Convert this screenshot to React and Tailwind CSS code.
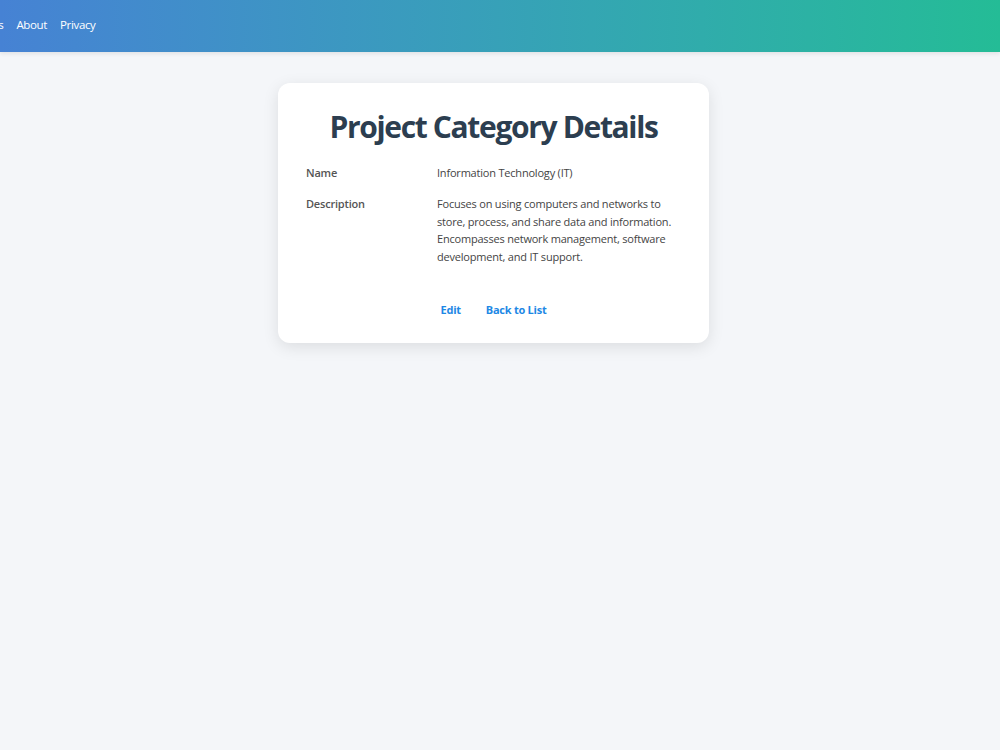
import React from 'react';

export default function App() {
    const rows = [
        { label: 'Name', value: 'Information Technology (IT)' },
        {
            label: 'Description',
            value: 'Focuses on using computers and networks to store, process, and share data and information. Encompasses network management, software development, and IT support.',
        },
    ];

    return (
        <div className="min-h-[750px] bg-[#f4f6f9] font-['Open_Sans',sans-serif]">
            <header className="h-[52px] bg-gradient-to-r from-[#4682d4] to-[#24bc96] shadow-[0_2px_4px_rgba(0,0,0,0.08)] flex items-center overflow-hidden">
                <nav className="flex items-center gap-[13px] -ml-[50px] -mt-[3px] text-[11.5px] tracking-[-0.35px] text-white">
                    <a href="#">Categories</a>
                    <a href="#">About</a>
                    <a href="#">Privacy</a>
                </nav>
            </header>

            <main className="flex justify-center pt-[31px] pr-[13px]">
                <div className="w-[431px] bg-white rounded-[12px] shadow-[0_4px_16px_rgba(0,0,0,0.1)] px-[28px] pt-[25px] pb-[24px]">
                    <h1 className="text-center text-[30px] font-bold text-[#2c3e50] leading-[38px] tracking-[-1.35px]">
                        Project Category Details
                    </h1>
                    <dl className="mt-[18px] flex flex-col gap-[14px] text-[11px] tracking-[-0.2px]">
                        {rows.map((row) => (
                            <div key={row.label} className="flex">
                                <dt className="w-[131px] shrink-0 font-semibold text-[#555] leading-[17.4px]">{row.label}</dt>
                                <dd className="text-[#444] leading-[17.4px]">{row.value}</dd>
                            </div>
                        ))}
                    </dl>
                    <div className="mt-[37px] flex justify-center gap-[25px] text-[11px] tracking-[-0.25px] font-bold text-[#1e88e5]">
                        <a href="#">Edit</a>
                        <a href="#">Back to List</a>
                    </div>
                </div>
            </main>
        </div>
    );
}
